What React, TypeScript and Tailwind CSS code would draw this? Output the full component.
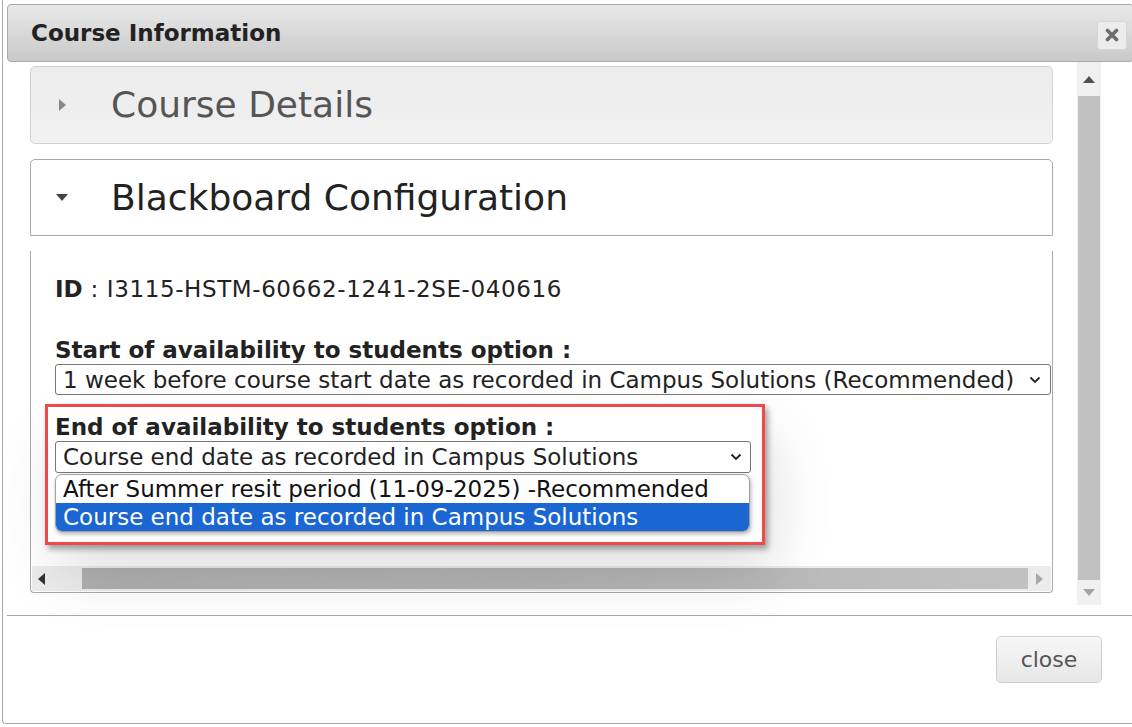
import React from 'react';

const font = { fontFamily: '"DejaVu Sans", Verdana, sans-serif' };

const Chevron = () => (
  <svg width="12" height="8" viewBox="0 0 12 8" className="shrink-0">
    <path d="M1.5 1.5 L6 6 L10.5 1.5" fill="none" stroke="#222" strokeWidth="1.8" />
  </svg>
);

const Triangle = ({ dir, color }: { dir: 'up' | 'down' | 'left' | 'right'; color: string }) => {
  const pts = {
    up: '0,7 6,0 12,7',
    down: '0,0 12,0 6,7',
    left: '7,0 7,12 0,6',
    right: '0,0 0,12 7,6',
  }[dir];
  const vb = dir === 'up' || dir === 'down' ? '0 0 12 7' : '0 0 7 12';
  const w = dir === 'up' || dir === 'down' ? 12 : 7;
  const h = dir === 'up' || dir === 'down' ? 7 : 12;
  return (
    <svg width={w} height={h} viewBox={vb}>
      <polygon points={pts} fill={color} />
    </svg>
  );
};

const App = () => {
  return (
    <div className="w-[1132px] h-[727px] bg-white overflow-hidden text-[#222]" style={font}>
      <div className="ml-[2px] w-[1132px] h-[724px] border-l border-b border-[#aaa] rounded-bl-[4px] flex flex-col">
        {/* title bar */}
        <div className="mt-[4px] ml-[4px] h-[58px] border border-[#aaa] rounded-[4px] bg-gradient-to-b from-[#e9e9e9] to-[#c9c9c9] flex items-center justify-between pl-[23px] pr-[6px]">
          <h1 className="text-[23px] font-bold text-[#222]">Course Information</h1>
          <button className="w-[30px] h-[29px] mt-[4px] rounded-[3px] border border-[#d6d6d6] bg-[#ececec] flex items-center justify-center">
            <svg width="14" height="14" viewBox="0 0 14 14">
              <path d="M2.5 2.5 L11.5 11.5 M11.5 2.5 L2.5 11.5" stroke="#6f6f6f" strokeWidth="3.6" strokeLinecap="round" />
            </svg>
          </button>
        </div>

        {/* body */}
        <div className="flex h-[543px] pl-[27px] gap-[24px]">
          <div className="w-[1023px] flex flex-col pt-[4px]">
            <div className="h-[78px] border border-[#d3d3d3] rounded-[5px] bg-gradient-to-b from-[#ececec] via-[#eeeeee] to-[#f2f2f2] flex items-center">
              <div className="w-[80px] pl-[28px]">
                <Triangle dir="right" color="#888" />
              </div>
              <span className="text-[36px] text-[#555] leading-none">Course Details</span>
            </div>

            <div className="mt-[15px] h-[77px] border border-[#aaa] rounded-t-[5px] bg-white flex items-center">
              <div className="w-[80px] pl-[25px]">
                <svg width="12" height="7" viewBox="0 0 12 7">
                  <polygon points="0,0 12,0 6,7" fill="#444" />
                </svg>
              </div>
              <span className="text-[36px] text-[#222] leading-none">Blackboard Configuration</span>
            </div>

            <div className="mt-[15px] h-[342px] border-l border-r border-b border-[#aaa] rounded-b-[4px] flex flex-col">
              <div className="flex-1 relative pl-[24px] pt-[24px]">
                <p className="text-[23px] leading-[28px] tracking-[0.6px]">
                  <b className="tracking-normal">ID</b> : I3115-HSTM-60662-1241-2SE-040616
                </p>

                <p className="mt-[33px] text-[23px] leading-[28px] font-bold">Start of availability to students option :</p>
                <div className="w-[996px] h-[31px] border border-[#767676] rounded-[3px] flex items-center justify-between pl-[7px] pr-[9px]">
                  <span className="text-[23px] leading-[28px] text-[#222]">1 week before course start date as recorded in Campus Solutions (Recommended)</span>
                  <Chevron />
                </div>

                {/* highlighted field */}
                <div className="mt-[9px] -ml-[10px] w-[720px] h-[141px] border-[3px] border-[#f44848] shadow-[3px_4px_6px_rgba(0,0,0,0.35),10px_30px_60px_rgba(0,0,0,0.12)] pl-[7px] pt-[6px] bg-white">
                  <p className="text-[23px] leading-[28px] font-bold">End of availability to students option :</p>
                  <div className="w-[696px] h-[32px] border border-[#767676] rounded-[3px] flex items-center justify-between pl-[7px] pr-[8px]">
                    <span className="text-[23px] leading-[28px] text-[#222]">Course end date as recorded in Campus Solutions</span>
                    <Chevron />
                  </div>
                  <ul className="mt-[1px] w-[695px] border border-[#a0a0a0] rounded-[7px] overflow-hidden shadow-[1px_2px_4px_rgba(0,0,0,0.3)] bg-white text-[23px]">
                    <li className="h-[28px] pl-[7px] flex items-center text-[#111]">After Summer resit period (11-09-2025) -Recommended</li>
                    <li className="h-[28px] pl-[7px] flex items-center bg-[#1a66d2] text-white">Course end date as recorded in Campus Solutions</li>
                  </ul>
                </div>
              </div>

              {/* horizontal scrollbar */}
              <div className="h-[25px] mx-[1px] mb-[1px] bg-[#ececec] flex items-center">
                <div className="w-[50px] h-full flex items-center pl-[6px]">
                  <Triangle dir="left" color="#333" />
                </div>
                <div className="w-[946px] h-[21px] bg-gradient-to-r from-[#b0b0b0] via-[#b3b3b3] to-[#c1c1c1]" />
                <div className="flex-1 h-full flex items-center justify-center">
                  <Triangle dir="right" color="#a8a8a8" />
                </div>
              </div>
            </div>
          </div>

          {/* vertical scrollbar */}
          <div className="w-[24px] h-[543px] bg-[#f0f0f0] flex flex-col items-center">
            <div className="h-[34px] flex items-center justify-center">
              <Triangle dir="up" color="#505050" />
            </div>
            <div className="w-[22px] h-[484px] bg-[#c1c1c1]" />
            <div className="flex-1 flex items-center justify-center">
              <Triangle dir="down" color="#a3a3a3" />
            </div>
          </div>
        </div>

        {/* button pane */}
        <div className="mt-[10px] ml-[4px] border-t border-[#aaa] flex justify-end pr-[32px] pt-[20px]">
          <button className="w-[106px] h-[47px] border border-[#cfcfcf] rounded-[5px] bg-gradient-to-b from-[#f7f7f7] to-[#e7e7e7] text-[22px] text-[#555]">
            close
          </button>
        </div>
      </div>
    </div>
  );
};

export default App;
